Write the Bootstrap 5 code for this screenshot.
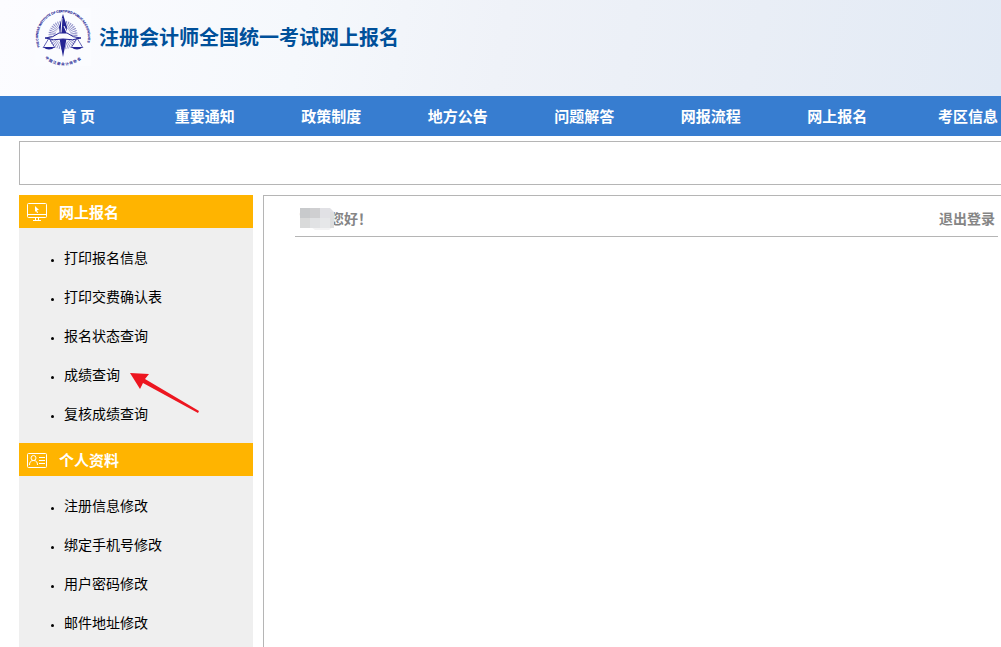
<!DOCTYPE html>
<html lang="zh-CN">
<head>
<meta charset="utf-8">
<meta name="viewport" content="width=device-width, initial-scale=1">
<title>注册会计师全国统一考试网上报名</title>
<link rel="stylesheet" href="https://cdn.jsdelivr.net/npm/bootstrap@5.3.0/dist/css/bootstrap.min.css">
<style>
body{font-family:"Noto Sans CJK SC",sans-serif;font-size:14px;line-height:20px;color:#000}
a{color:inherit;text-decoration:none}
.masthead{height:96px;padding:8px 0 0 35px;background:linear-gradient(100deg,#fcfcff 0%,#f5f8fc 30%,#eff2f8 50%,#e9eef6 75%,#e2eaf5 100%)}
.masthead h1{font-size:20px;line-height:26px;font-weight:700;color:#00509a}
.main-nav{background:#377dd0;height:40px;padding-left:15px;padding-right:3px}
.main-nav li{flex:127 1 0;text-align:center}
.main-nav li:last-child{flex-grow:98;text-align:right}
.main-nav a{display:block;font-size:15px;line-height:40px;font-weight:700;color:#fff;white-space:pre}
.page-body{padding-left:19px}
.notice{height:44px;margin-top:5px;border:1px solid #b5b5b5;border-right:0}
.side{width:234px;background:#efefef}
.side h2{height:33px;padding-left:8px;gap:12px;background:#ffb400;color:#fff;font-size:15px;line-height:33px;font-weight:700}
.side ul{padding:10px 0 10px 45px;list-style:none}
.side li{position:relative;line-height:39px}
.side li::before{content:"";position:absolute;left:-13px;top:21px;width:3px;height:3px;border-radius:50%;background:#000}
.pointer{position:absolute;left:66px;top:17px}
.panel{border:1px solid #b5b5b5;border-right:0;border-bottom:0;padding:0 3px 0 31px;min-height:452px}
.greeting{height:41px;padding:3px 3px 0 4px;border-bottom:1px solid #b5b5b5;font-weight:700;color:#858585}
.masked-name{margin-right:-4px;z-index:1}
</style>
<script src="https://cdn.jsdelivr.net/npm/bootstrap@5.3.0/dist/js/bootstrap.bundle.min.js"></script>
</head>
<body class="vh-100 overflow-hidden">
<header class="masthead d-flex align-items-start">
<svg width="56" height="58" viewBox="0 0 56 58" fill="none" stroke="#252594" aria-hidden="true">
<path fill="#fbfcff" stroke="none" d="M0 0h56v58H0z"/>
<defs><path id="ring" d="M5 39A25 25 0 1 1 51 39"/><path id="base" d="M8 48A27 27 0 0 0 49 48"/></defs>
<g fill="#252594" stroke="none"><text font-family="Liberation Sans" font-size="3" stroke="#252594" stroke-width=".2"><textPath href="#ring">THE CHINESE INSTITUTE OF CERTIFIED PUBLIC ACCOUNTANTS</textPath></text>
<text font-family="Noto Sans CJK SC" font-weight="700" font-size="3.600"><textPath href="#base" startOffset="3">中 国 注 册 会 计 师 协 会</textPath></text></g>
<path d="M15 27a13 13 0 0 1 26 0" stroke-width=".1"/>
<circle cx="28" cy="27" r="11" stroke-width="7" stroke-dasharray=".8 1" opacity=".5"/>
<path d="M28 6l-4 13 1 8h6l1-8zM24 28h8l-4 21z" fill="#252594" stroke="none"/>
<path d="M27 10l-1 15M29 18l3 7" stroke="#fff"/>
<path d="M10 30q8 0 14-5h8q6 5 14 5-8 3-18 1-10 2-18-1z" fill="#fbfcff"/>
<path d="M14 30l-6 10M14 30l6 10M42 30l-6 10M42 30l6 10" stroke-width=".7"/>
<path d="M8 39h12q-6 5-12 0zM36 39h12q-6 5-12 0z" fill="#252594" stroke="none"/>
</svg>
<h1 class="m-0 ms-2 mt-3">注册会计师全国统一考试网上报名</h1>
</header>
<nav class="main-nav" aria-label="主导航"><ul class="list-unstyled d-flex m-0">
<li><a href="#">首 页</a></li><li><a href="#">重要通知</a></li><li><a href="#">政策制度</a></li><li><a href="#">地方公告</a></li><li><a href="#">问题解答</a></li><li><a href="#">网报流程</a></li><li><a href="#">网上报名</a></li><li><a href="#">考区信息</a></li>
</ul></nav>
<div class="page-body">
<div class="notice"></div>
<div class="d-flex" style="gap:10px;margin-top:10px">
<aside class="side flex-shrink-0">
<h2 class="d-flex align-items-center m-0"><svg width="20" height="20" viewBox="0 0 20 20" fill="none" stroke="#fff" aria-hidden="true"><rect x=".5" y="1.500" width="19" height="14" rx="1"/><path d="M1 12.500h18M8.500 16v2M11.500 16v2M6 18.500h8"/><path d="M8 4l4 4-2 0 1 3-1 0-1-2-1 1z" fill="#fff" stroke="none"/></svg>网上报名</h2>
<ul class="m-0">
<li><a href="#">打印报名信息</a></li><li><a href="#">打印交费确认表</a></li><li><a href="#">报名状态查询</a></li>
<li><a href="#">成绩查询</a><svg class="pointer" width="70" height="42" viewBox="0 0 70 42" fill="#ed1620" aria-hidden="true"><path d="M0 1l19 1-4 5 54 32-1 2-55-30-3 6z"/></svg></li>
<li><a href="#">复核成绩查询</a></li>
</ul>
<h2 class="d-flex align-items-center m-0"><svg width="20" height="20" viewBox="0 0 20 20" fill="none" stroke="#fff" aria-hidden="true"><rect x=".5" y="3.500" width="19" height="14" rx="1"/><circle cx="6.500" cy="8" r="2.500"/><path d="M2.500 15q0-4.500 4-4.500t4 4.500M12 7.500h6M12 10.500h6M12 13.500h6"/></svg>个人资料</h2>
<ul class="m-0"><li><a href="#">注册信息修改</a></li><li><a href="#">绑定手机号修改</a></li><li><a href="#">用户密码修改</a></li><li><a href="#">邮件地址修改</a></li></ul>
</aside>
<main class="panel flex-fill">
<div class="greeting d-flex justify-content-between align-items-center">
<span class="d-flex align-items-center"><svg class="masked-name position-relative" width="35" height="24" viewBox="0 0 35 24" aria-hidden="true"><path fill="#f6f1ee" d="M0 8l4-6v14z"/><path fill="#f3f3f4" d="M12 21h22l-4 3H16z"/><path fill="#c8cacc" d="M1 2h10v10H1z"/><path fill="#cfcfd1" d="M11 2h10v10H11z"/><path fill="#e1e1e5" d="M21 2h10l4 4v6H21z"/><path fill="#d9dada" d="M1 12h10v10H1z"/><path fill="#e1e2e4" d="M11 12h10v10H11z"/><path fill="#e6e7e9" d="M21 12h10v10H21z"/><path fill="#dedede" d="M31 6h4v16h-4z"/></svg>您好！</span>
<a href="#">退出登录</a></div>
</main>
</div>
</div>
</body>
</html>
